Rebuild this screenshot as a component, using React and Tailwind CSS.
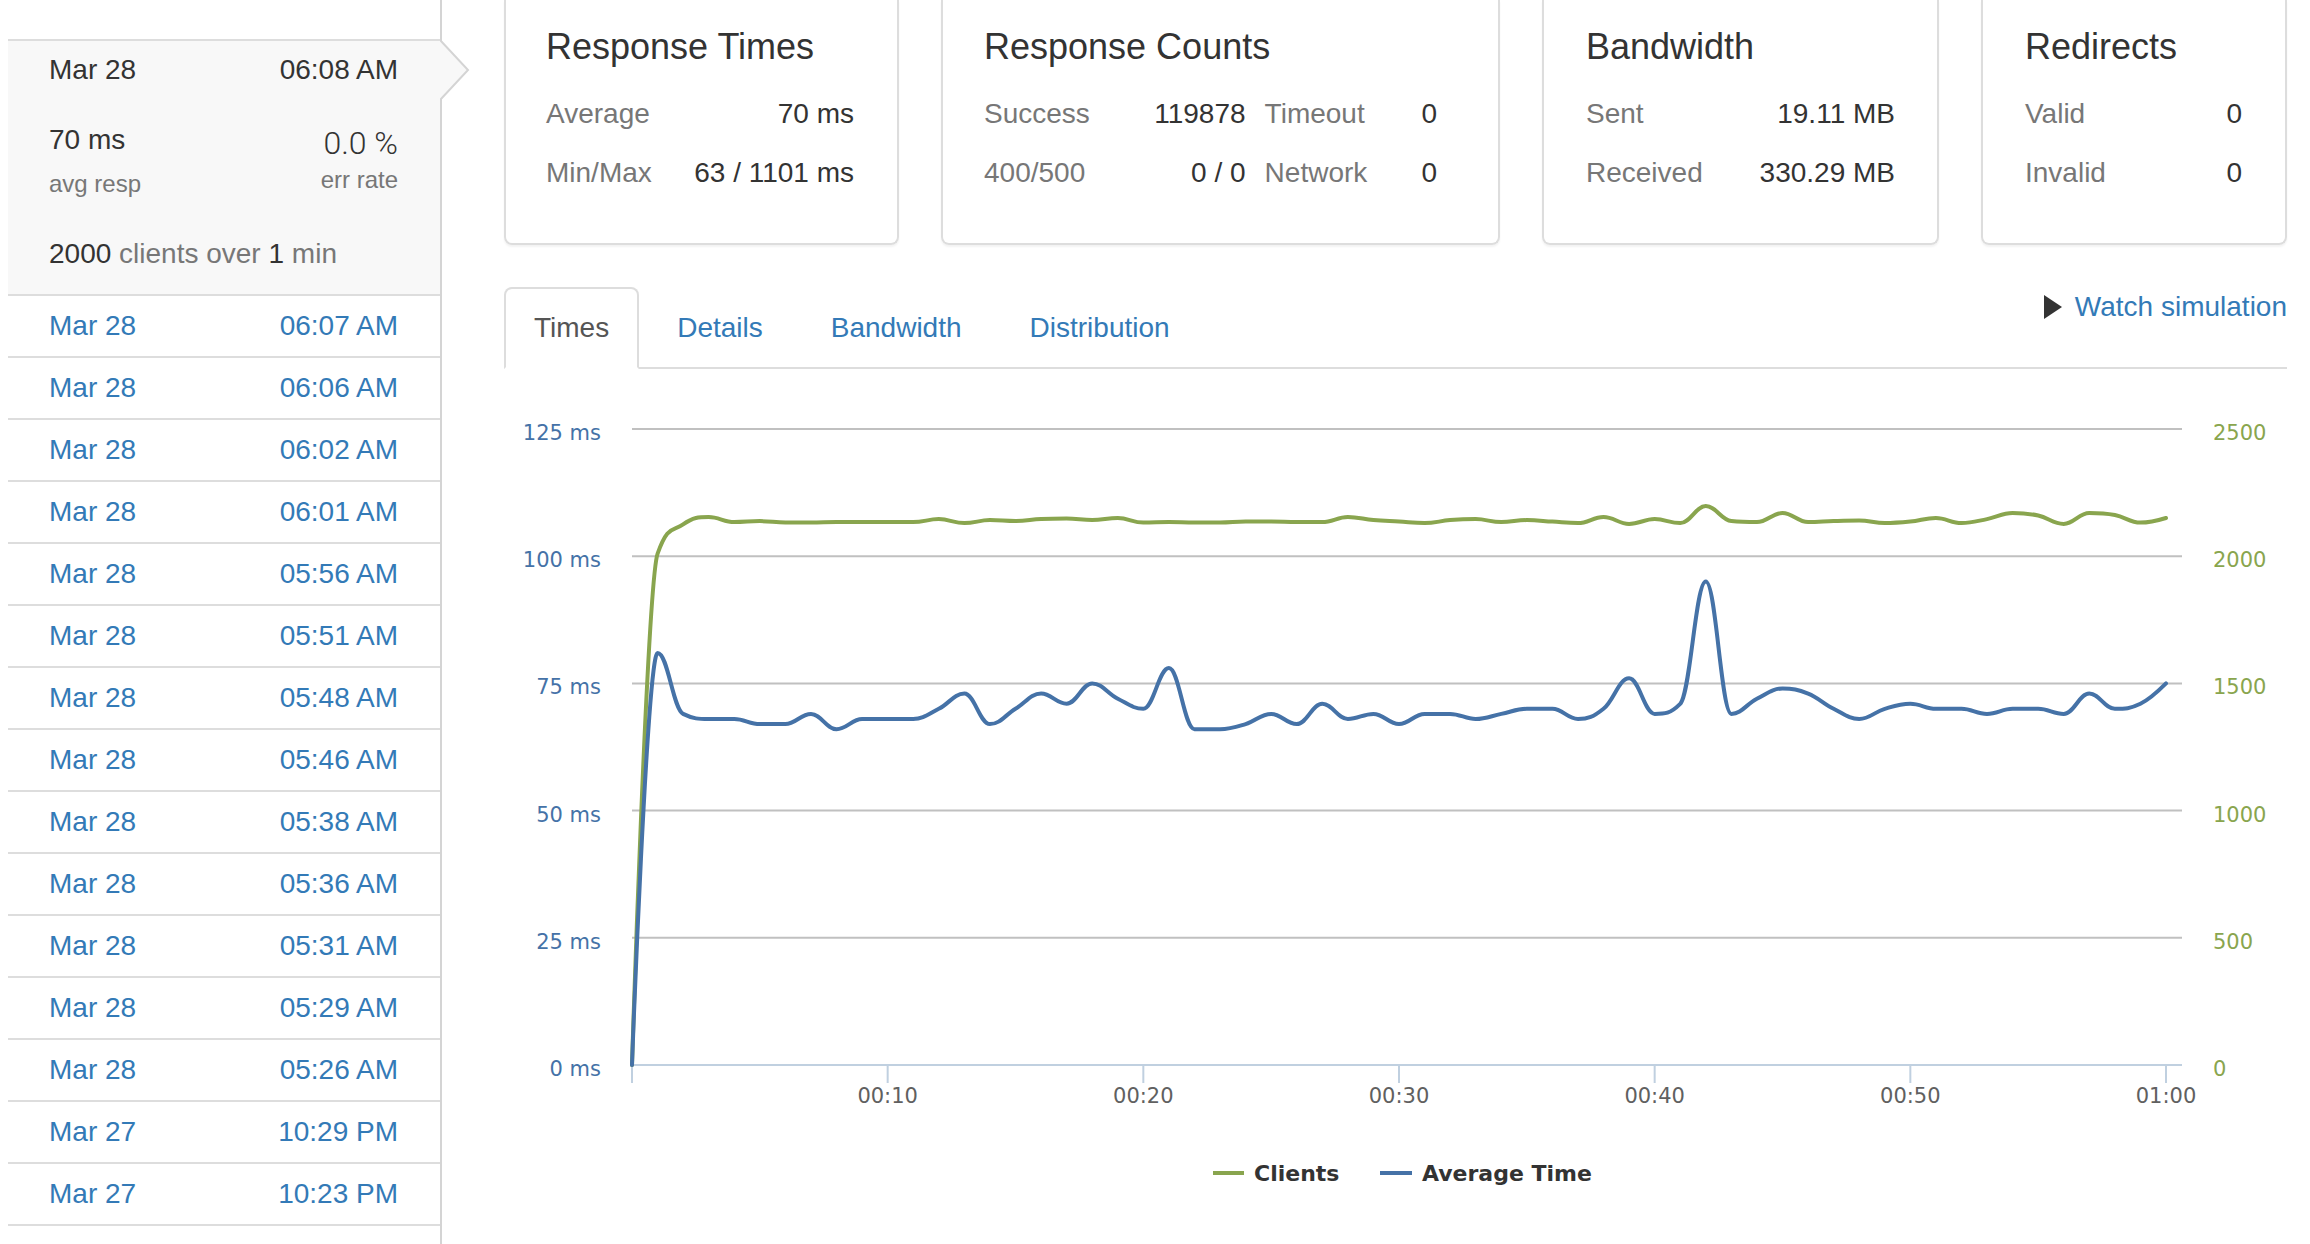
import React from 'react';

const runs = [
  ['Mar 28', '06:07 AM'],
  ['Mar 28', '06:06 AM'],
  ['Mar 28', '06:02 AM'],
  ['Mar 28', '06:01 AM'],
  ['Mar 28', '05:56 AM'],
  ['Mar 28', '05:51 AM'],
  ['Mar 28', '05:48 AM'],
  ['Mar 28', '05:46 AM'],
  ['Mar 28', '05:38 AM'],
  ['Mar 28', '05:36 AM'],
  ['Mar 28', '05:31 AM'],
  ['Mar 28', '05:29 AM'],
  ['Mar 28', '05:26 AM'],
  ['Mar 27', '10:29 PM'],
  ['Mar 27', '10:23 PM'],
];

// one sample per second, 0..60
const clients = [
  0, 2010, 2125, 2154, 2134, 2138, 2132, 2132, 2134, 2134,
  2134, 2134, 2146, 2130, 2142, 2138, 2146, 2148, 2142, 2150,
  2132, 2134, 2132, 2132, 2136, 2136, 2134, 2134, 2154, 2142,
  2136, 2130, 2142, 2146, 2134, 2142, 2136, 2130, 2154, 2127,
  2146, 2130, 2197, 2138, 2134, 2170, 2134, 2138, 2140, 2130,
  2136, 2150, 2130, 2146, 2170, 2160, 2127, 2170, 2162, 2132,
  2150,
];

const avgTime = [
  0, 81, 69, 68, 68, 67, 67, 69, 66, 68,
  68, 68, 70, 73, 67, 70, 73, 71, 75, 72,
  70, 78, 66, 66, 67, 69, 67, 71, 68, 69,
  67, 69, 69, 68, 69, 70, 70, 68, 70, 76,
  69, 71, 95, 69, 72, 74, 73, 70, 68, 70,
  71, 70, 70, 69, 70, 70, 69, 73, 70, 71,
  75,
];

// chart geometry (px inside the svg)
const W = 1783;
const H = 875;
const plotLeft = 128;
const plotRight = 1678;
const plotBottom = 696;
const plotTop = 60;
const perSec = (1662 - plotLeft) / 60;
const xAt = (t) => plotLeft + t * perSec;
const yMs = (v) => plotBottom - (v * (plotBottom - plotTop)) / 125;
const yClients = (v) => plotBottom - (v * (plotBottom - plotTop)) / 2500;

// highcharts-like spline
const splinePath = (pts) => {
  const smoothing = 1.5;
  const denom = smoothing + 1;
  const conts = pts.map((p, i) => {
    if (i === 0 || i === pts.length - 1) return null;
    const [lx, ly] = pts[i - 1];
    const [x, y] = p;
    const [nx, ny] = pts[i + 1];
    const lcx = (smoothing * x + lx) / denom;
    let lcy = (smoothing * y + ly) / denom;
    const rcx = (smoothing * x + nx) / denom;
    let rcy = (smoothing * y + ny) / denom;
    const corr = ((rcy - lcy) * (rcx - x)) / (rcx - lcx) + y - rcy;
    lcy += corr;
    rcy += corr;
    if (lcy > ly && lcy > y) {
      lcy = Math.max(ly, y);
      rcy = 2 * y - lcy;
    } else if (lcy < ly && lcy < y) {
      lcy = Math.min(ly, y);
      rcy = 2 * y - lcy;
    }
    if (rcy > ny && rcy > y) {
      rcy = Math.max(ny, y);
      lcy = 2 * y - rcy;
    } else if (rcy < ny && rcy < y) {
      rcy = Math.min(ny, y);
      lcy = 2 * y - rcy;
    }
    return { lcx, lcy, rcx, rcy };
  });
  let d = `M ${pts[0][0].toFixed(1)} ${pts[0][1].toFixed(1)}`;
  for (let i = 1; i < pts.length; i++) {
    const prev = conts[i - 1];
    const cur = conts[i];
    const c1x = prev ? prev.rcx : pts[i - 1][0];
    const c1y = prev ? prev.rcy : pts[i - 1][1];
    const c2x = cur ? cur.lcx : pts[i][0];
    const c2y = cur ? cur.lcy : pts[i][1];
    d += ` C ${c1x.toFixed(1)} ${c1y.toFixed(1)} ${c2x.toFixed(1)} ${c2y.toFixed(1)} ${pts[i][0].toFixed(1)} ${pts[i][1].toFixed(1)}`;
  }
  return d;
};

const TimesChart = () => {
  const greenPts = clients.map((v, t) => [xAt(t), yClients(v)]);
  const bluePts = avgTime.map((v, t) => [xAt(t), yMs(v)]);
  const ticks = [0, 25, 50, 75, 100, 125];

  return (
    <svg width={W} height={H} viewBox={`0 0 ${W} ${H}`} className="block" style={{ fontFamily: '"DejaVu Sans", Verdana, sans-serif' }}>
      {ticks.slice(1).map((v) => (
        <line key={v} x1={plotLeft} x2={plotRight} y1={yMs(v)} y2={yMs(v)} stroke="#C0C0C0" strokeWidth="2" />
      ))}
      <line x1={plotLeft} x2={plotRight} y1={plotBottom} y2={plotBottom} stroke="#C0D0E0" strokeWidth="2" />
      {[0, 10, 20, 30, 40, 50, 60].map((t) => (
        <line key={t} x1={xAt(t)} x2={xAt(t)} y1={plotBottom} y2={plotBottom + 18} stroke="#C0D0E0" strokeWidth="2" />
      ))}
      {[10, 20, 30, 40, 50, 60].map((t) => (
        <text key={t} x={xAt(t)} y={plotBottom + 38} textAnchor="middle" fontSize="21" fill="#606060">
          {t === 60 ? '01:00' : `00:${t}`}
        </text>
      ))}
      {ticks.map((v) => (
        <text key={v} x="97" y={yMs(v) + 11} textAnchor="end" fontSize="21" fill="#4572A7">
          {v} ms
        </text>
      ))}
      {ticks.map((v) => (
        <text key={v} x="1709" y={yMs(v) + 11} textAnchor="start" fontSize="21" fill="#89A54E">
          {v * 20}
        </text>
      ))}
      <path d={splinePath(greenPts)} fill="none" stroke="#89A54E" strokeWidth="4" strokeLinejoin="round" strokeLinecap="round" />
      <path d={splinePath(bluePts)} fill="none" stroke="#4572A7" strokeWidth="4" strokeLinejoin="round" strokeLinecap="round" />

      {/* legend */}
      <line x1="709" x2="740" y1="804" y2="804" stroke="#89A54E" strokeWidth="4" />
      <text x="750" y="812" fontSize="22" fontWeight="bold" fill="#333">Clients</text>
      <line x1="876" x2="908" y1="804" y2="804" stroke="#4572A7" strokeWidth="4" />
      <text x="918" y="812" fontSize="22" fontWeight="bold" fill="#333">Average Time</text>
    </svg>
  );
};

const StatRow = ({ label, value, className = '' }) => (
  <div className={`flex h-[40px] items-center justify-between leading-[40px] ${className}`}>
    <span className="text-[#777]">{label}</span>
    <span className="text-[#333]">{value}</span>
  </div>
);

const Card = ({ title, width, children, pad }) => (
  <div className={`${width} shrink-0 rounded-b-[8px] border-x-2 border-b-2 border-[#ddd] pt-[27px] pb-[50px] shadow-[0_2px_2px_rgba(0,0,0,0.05)] ${pad}`}>
    <h3 className="text-[36px] leading-[40px] text-[#333]">{title}</h3>
    {children}
  </div>
);

const tabs = ['Times', 'Details', 'Bandwidth', 'Distribution'];

const App = () => {
  return (
    <div className="flex h-[1244px] overflow-hidden bg-white font-['Liberation_Sans',Arial,sans-serif] text-[28px] text-[#333]">
      {/* run list */}
      <div className="ml-[8px] w-[434px] shrink-0 border-r-2 border-[#d4d4d4] pt-[39px]">
        <div className="relative border-y-2 border-[#ddd] bg-[#f8f8f8] pl-[41px] pr-[42px] pt-[9px] pb-[20px]">
          <div className="flex h-[40px] items-center justify-between leading-[40px]">
            <span>Mar 28</span>
            <span>06:08 AM</span>
          </div>
          <div className="mt-[30px] flex justify-between">
            <div>
              <div className="h-[40px] leading-[40px]">70 ms</div>
              <div className="mt-[7px] h-[34px] text-[24px] leading-[34px] text-[#777]">avg resp</div>
            </div>
            <div className="pt-[3px] text-right">
              <div className="h-[40px] font-['Roboto',sans-serif] text-[32px] font-light leading-[40px]">0.0 %</div>
              <div className="h-[34px] text-[24px] leading-[34px] text-[#777]">err rate</div>
            </div>
          </div>
          <div className="mt-[33px] h-[40px] leading-[40px]">
            2000 <span className="text-[#777]">clients over</span> 1 <span className="text-[#777]">min</span>
          </div>
          <svg className="absolute left-full top-[-2px]" width="30" height="62" viewBox="0 0 30 62">
            <rect x="0" y="2" width="3" height="58" fill="#f8f8f8" />
            <polygon points="0,1 28,31 0,61" fill="#f8f8f8" />
            <polyline points="0,1 28,31 0,61" fill="none" stroke="#d4d4d4" strokeWidth="2" />
          </svg>
        </div>
        {runs.map(([day, time], i) => (
          <div
            key={i}
            className="flex h-[62px] items-center justify-between border-b-2 border-[#ddd] pl-[41px] pr-[42px] text-[#337ab7]"
          >
            <span>{day}</span>
            <span>{time}</span>
          </div>
        ))}
      </div>

      {/* main */}
      <div className="ml-[62px] w-[1783px] shrink-0">
        <div className="flex gap-[42px]">
          <Card title="Response Times" width="w-[395px]" pad="pl-[40px] pr-[43px]">
            <StatRow label="Average" value="70 ms" className="mt-[27px]" />
            <StatRow label="Min/Max" value="63 / 1101 ms" className="mt-[19px]" />
          </Card>
          <Card title="Response Counts" width="w-[559px]" pad="pl-[41px] pr-[61px]">
            <div className="mt-[27px] flex gap-[19px]">
              <StatRow label="Success" value="119878" className="w-[264px]" />
              <StatRow label="Timeout" value="0" className="w-[174px]" />
            </div>
            <div className="mt-[19px] flex gap-[19px]">
              <StatRow label="400/500" value="0 / 0" className="w-[264px]" />
              <StatRow label="Network" value="0" className="w-[174px]" />
            </div>
          </Card>
          <Card title="Bandwidth" width="w-[397px]" pad="pl-[42px] pr-[42px]">
            <StatRow label="Sent" value="19.11 MB" className="mt-[27px]" />
            <StatRow label="Received" value="330.29 MB" className="mt-[19px]" />
          </Card>
          <Card title="Redirects" width="w-[306px]" pad="pl-[42px] pr-[43px]">
            <StatRow label="Valid" value="0" className="mt-[27px]" />
            <StatRow label="Invalid" value="0" className="mt-[19px]" />
          </Card>
        </div>

        <div className="mt-[42px] flex border-b-2 border-[#ddd]">
          {tabs.map((tab, i) => (
            <div
              key={tab}
              className={
                i === 0
                  ? '-mb-[2px] mr-[8px] rounded-t-[8px] border-2 border-[#ddd] border-b-transparent bg-white px-[28px] py-[19px] leading-[40px] text-[#555]'
                  : '-mb-[2px] mr-[8px] rounded-t-[8px] border-2 border-transparent px-[28px] py-[19px] leading-[40px] text-[#337ab7]'
              }
            >
              {tab}
            </div>
          ))}
          <div className="ml-auto flex h-[40px] items-center gap-[13px] self-start leading-[40px] text-[#337ab7]">
            <svg width="18" height="24" viewBox="0 0 18 24">
              <polygon points="0,0 18,12 0,24" fill="#333" />
            </svg>
            <span>Watch simulation</span>
          </div>
        </div>

        <TimesChart />
      </div>
    </div>
  );
};

export default App;
